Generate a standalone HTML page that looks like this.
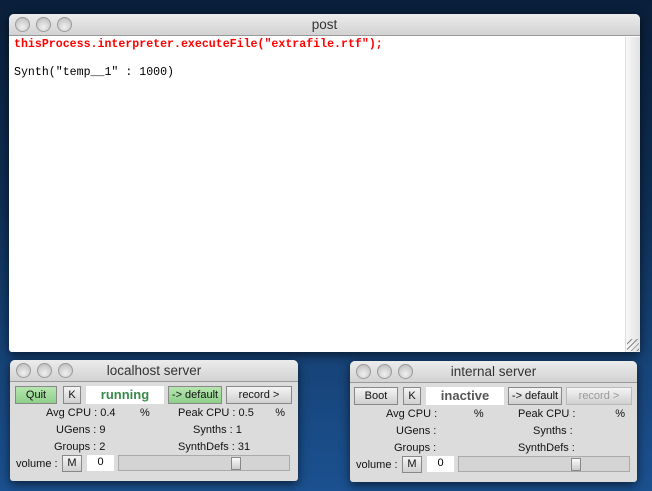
<!DOCTYPE html>
<html><head><style>
*{margin:0;padding:0;box-sizing:border-box}
body{width:652px;height:491px;overflow:hidden;position:relative;background:linear-gradient(#0a1f3a 0%,#0e2d52 40%,#174479 75%,#1b5190 100%);font-family:"Liberation Sans",sans-serif}
.win{position:absolute;background:#dcdcdc;border-radius:5px 5px 3px 3px;box-shadow:0 3px 10px rgba(0,0,0,.6)}
.tb{height:22px;border-radius:5px 5px 0 0;background:linear-gradient(#ececec,#d2d2d2);border-bottom:1px solid #999;position:relative;text-align:center;font-size:13.5px;color:#333;line-height:22px}
.dots{position:absolute;left:6px;top:3px}
.dots i{display:inline-block;width:15px;height:15px;border-radius:50%;margin-right:6px;background:radial-gradient(circle at 50% 70%,#f0f0f0,#b8b8b8);border:1px solid #999}
.mono{font-family:"Liberation Mono",monospace;font-size:11.6px;position:absolute;left:5px}
.b{position:absolute;height:18px;font-size:11px;text-align:center;line-height:17px;border:1px solid #888;background:linear-gradient(#f4f4f4,#d0d0d0);color:#111}
.g{background:linear-gradient(#b6e6b0,#8fd08a)}
.f{position:absolute;background:#fff;font-size:13px;font-weight:bold;text-align:center;line-height:18px;height:18px}
.l{position:absolute;font-size:11px;color:#111;white-space:pre}
.sl{position:absolute;height:16px;border:1px solid #aaa;background:#d4d4d4}
.th{position:absolute;top:1px;width:10px;height:13px;background:linear-gradient(#fafafa,#ccc);border:1px solid #888}
</style></head><body>

<div class="win" style="left:9px;top:14px;width:631px;height:338px;background:#fff">
 <div class="tb"><div class="dots"><i></i><i></i><i></i></div>post</div>
 <div class="mono" style="top:24px;color:#f00;font-weight:bold">thisProcess.interpreter.executeFile("extrafile.rtf");</div>
 <div class="mono" style="top:52px;color:#000">Synth("temp__1" : 1000)</div>
 <div style="position:absolute;right:0;top:23px;width:15px;bottom:0;background:linear-gradient(90deg,#f8f8f8,#e2e2e2);border-left:1px solid #ddd"></div>
 <div style="position:absolute;right:1px;bottom:1px;width:12px;height:12px;background:repeating-linear-gradient(135deg,transparent 0 3px,#888 3px 4px)"></div>
</div>

<div class="win" style="left:10px;top:360px;width:288px;height:121px">
 <div class="tb"><div class="dots"><i></i><i></i><i></i></div>localhost server</div>
 <div class="b g" style="left:5px;top:26px;width:42px">Quit</div>
 <div class="b" style="left:53px;top:26px;width:18px">K</div>
 <div class="f" style="left:76px;top:26px;width:78px;color:#3a8a4a">running</div>
 <div class="b g" style="left:158px;top:26px;width:54px">-&gt; default</div>
 <div class="b" style="left:216px;top:26px;width:66px">record &gt;</div>
 <div class="l" style="left:36px;top:47px">Avg CPU : 0.4        %</div>
 <div class="l" style="left:168px;top:47px">Peak CPU : 0.5       %</div>
 <div class="l" style="left:46px;top:64px">UGens : 9</div>
 <div class="l" style="left:183px;top:64px">Synths : 1</div>
 <div class="l" style="left:44px;top:81px">Groups : 2</div>
 <div class="l" style="left:168px;top:81px">SynthDefs : 31</div>
 <div class="l" style="left:6px;top:98px">volume :</div>
 <div class="b" style="left:52px;top:95px;width:20px;height:17px;line-height:15px">M</div>
 <div class="f" style="left:77px;top:95px;width:27px;height:16px;font-weight:normal;font-size:11px;line-height:14px">0</div>
 <div class="sl" style="left:108px;top:95px;width:172px"><div class="th" style="left:112px"></div></div>
</div>

<div class="win" style="left:350px;top:361px;width:287px;height:121px">
 <div class="tb"><div class="dots"><i></i><i></i><i></i></div>internal server</div>
 <div class="b" style="left:4px;top:26px;width:44px">Boot</div>
 <div class="b" style="left:53px;top:26px;width:18px">K</div>
 <div class="f" style="left:76px;top:26px;width:78px;color:#555">inactive</div>
 <div class="b" style="left:158px;top:26px;width:54px">-&gt; default</div>
 <div class="b" style="left:216px;top:26px;width:66px;color:#999;border-color:#bbb">record &gt;</div>
 <div class="l" style="left:36px;top:47px">Avg CPU :            %</div>
 <div class="l" style="left:168px;top:47px">Peak CPU :             %</div>
 <div class="l" style="left:46px;top:64px">UGens :</div>
 <div class="l" style="left:183px;top:64px">Synths :</div>
 <div class="l" style="left:44px;top:81px">Groups :</div>
 <div class="l" style="left:168px;top:81px">SynthDefs :</div>
 <div class="l" style="left:6px;top:98px">volume :</div>
 <div class="b" style="left:52px;top:95px;width:20px;height:17px;line-height:15px">M</div>
 <div class="f" style="left:77px;top:95px;width:27px;height:16px;font-weight:normal;font-size:11px;line-height:14px">0</div>
 <div class="sl" style="left:108px;top:95px;width:172px"><div class="th" style="left:112px"></div></div>
</div>
</body></html>
